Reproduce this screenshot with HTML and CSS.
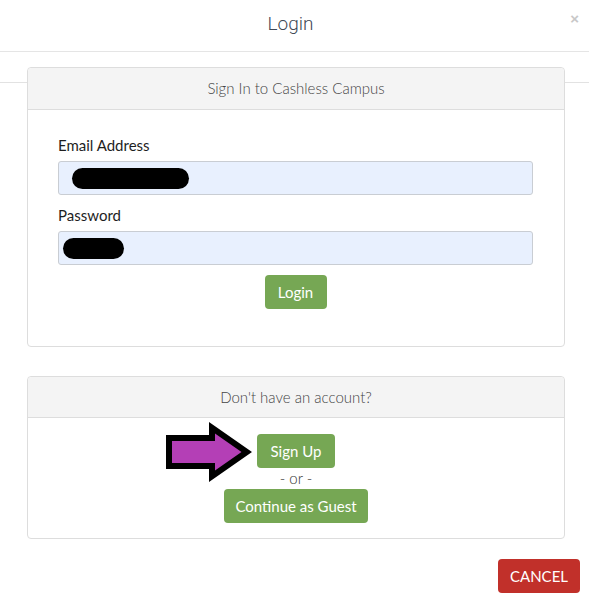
FILE: index.html
```html
<!DOCTYPE html>
<html lang="en">
<head>
<meta charset="utf-8">
<title>Login</title>
<link rel="stylesheet" href="styles.css">
</head>
<body>
<div class="modal">
  <div class="modal-header">
    <h4 class="modal-title">Login</h4>
    <span class="close">&times;</span>
  </div>
  <div class="modal-body">
    <div class="panel">
      <div class="panel-heading">Sign In to Cashless Campus</div>
      <div class="panel-body signin">
        <label class="label">Email Address</label>
        <div class="field"><span class="redact redact-email"></span></div>
        <label class="label label-pw">Password</label>
        <div class="field"><span class="redact redact-pw"></span></div>
        <div class="actions">
          <button class="btn btn-green btn-login">Login</button>
        </div>
      </div>
    </div>
    <div class="panel">
      <div class="panel-heading heading-sm">Don't have an account?</div>
      <div class="panel-body signup">
        <div class="signup-wrap">
          <svg class="arrow" viewBox="0 0 86 60" width="86" height="60" aria-hidden="true">
            <polygon points="0,13 43,13 43,0 86,30 43,60 43,47 0,47" fill="#000"/>
            <polygon points="6,19 49,19 49,11.5 75.5,30 49,48.5 49,41 6,41" fill="#b43fb6"/>
          </svg>
          <button class="btn btn-green btn-signup">Sign Up</button>
        </div>
        <div class="or">- or -</div>
        <button class="btn btn-green btn-guest">Continue as Guest</button>
      </div>
    </div>
  </div>
  <div class="modal-footer">
    <button class="btn btn-red">CANCEL</button>
  </div>
</div>
</body>
</html>
```

FILE: styles.css
```css
* { box-sizing: border-box; }
html, body { margin: 0; padding: 0; background: #fff; }
body {
  font-family: Lato, "Open Sans", "Liberation Sans", sans-serif;
  font-size: 14px;
  color: #333;
}
.modal { width: 589px; }
.modal-header {
  position: relative;
  height: 52px;
  border-bottom: 1px solid #e5e5e5;
  display: flex;
  align-items: center;
  justify-content: center;
  padding-right: 8px;
}
.modal-title {
  margin: 0;
  font-family: Roboto, "Liberation Sans", sans-serif;
  font-weight: 300;
  font-size: 19px;
  color: #404855;
  padding-bottom: 4px;
}
.close {
  position: absolute;
  right: 10px;
  top: 10px;
  font-family: "Liberation Sans", sans-serif;
  font-size: 15px;
  font-weight: bold;
  color: #c8c8c8;
}
.modal-body {
  position: relative;
  padding: 15px 24px 0 27px;
}
.modal-body::before {
  content: "";
  position: absolute;
  left: 0;
  right: 0;
  top: 30px;
  height: 1px;
  background: #e2e2e2;
}
.panel {
  position: relative;
  background: #fff;
  border: 1px solid #ddd;
  border-radius: 4px;
  margin-bottom: 29px;
}
.panel:last-child { margin-bottom: 0; }
.panel-heading {
  background: #f4f4f4;
  border-bottom: 1px solid #ddd;
  border-radius: 4px 4px 0 0;
  height: 42px;
  line-height: 41px;
  text-align: center;
  font-size: 15px;
  font-weight: 300;
  color: #444;
}
.panel-heading.heading-sm { height: 41px; line-height: 40px; }
.signin {
  padding: 25px 31px 37px 30px;
  display: flex;
  flex-direction: column;
}
.label {
  display: block;
  line-height: 20px;
  font-size: 15px;
  font-weight: 400;
  color: #1e1e1e;
  margin-bottom: 6px;
}
.label-pw { margin-top: 10px; }
.field {
  height: 34px;
  background: #e8f0fe;
  border: 1px solid #c9cdd3;
  border-radius: 3px;
  display: flex;
  align-items: center;
}
.redact {
  display: block;
  height: 21px;
  background: #000;
  border-radius: 11px;
}
.redact-email { width: 117px; margin-left: 13px; }
.redact-pw { width: 61px; margin-left: 4px; }
.actions {
  margin-top: 10px;
  display: flex;
  justify-content: center;
}
.btn {
  height: 34px;
  border: none;
  border-radius: 4px;
  padding: 0;
  font-family: Lato, "Open Sans", "Liberation Sans", sans-serif;
  font-size: 15px;
  font-weight: 400;
  color: #fff;
  white-space: nowrap;
  cursor: pointer;
}
.btn-green { background: #76a754; }
.btn-login { width: 62px; }
.btn-signup { width: 78px; }
.btn-guest { width: 144px; }
.btn-red { background: #c1302a; width: 82px; }
.signup {
  padding: 16px 0 15px;
  display: flex;
  flex-direction: column;
  align-items: center;
}
.signup-wrap { position: relative; }
.arrow {
  position: absolute;
  right: calc(100% + 5px);
  top: -12px;
  display: block;
}
.or {
  line-height: 21px;
  font-size: 15px;
  font-weight: 300;
  color: #333;
}
.modal-footer {
  display: flex;
  justify-content: flex-end;
  padding: 20px 9px 10px 0;
}
```
